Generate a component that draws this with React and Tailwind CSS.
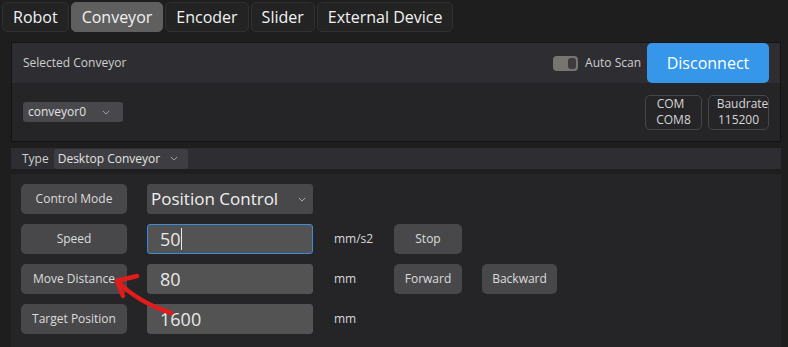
import React from 'react';

const font = { fontFamily: '"Open Sans", "Noto Sans", sans-serif' };

const Chevron = ({ className = '' }) => (
  <svg viewBox="0 0 10 6" className={className} fill="none" stroke="currentColor" strokeWidth="1">
    <path d="M1 1l4 4 4-4" />
  </svg>
);

const Tab = ({ label, active }) => (
  <div
    className={
      'h-[30px] px-[10px] flex items-center rounded-[5px] border text-[16px] text-[#f2f2f2] ' +
      (active ? 'bg-[#5f5f5f] border-[#5f5f5f]' : 'bg-[#232323] border-[#303030]')
    }
  >
    {label}
  </div>
);

const Btn = ({ children, className = '' }) => (
  <div className={'h-[30px] flex items-center justify-center rounded-[5px] bg-[#48484b] text-[12px] text-[#dcdcdc] whitespace-nowrap ' + className}>
    {children}
  </div>
);

const Field = ({ value, focused, caret }) => (
  <div
    className={
      'w-[166px] h-[30px] flex items-center px-[12px] rounded-[3px] bg-[#535353] text-[18px] text-[#e8e8e8] border ' +
      (focused ? 'border-[#3a8bd8]' : 'border-[#535353]')
    }
  >
    {value}
    {caret && <span className="w-px h-[22px] bg-[#e8e8e8]" />}
  </div>
);

export default function App() {
  return (
    <div style={font} className="relative w-[788px] h-[347px] bg-[#1e1e1e] overflow-hidden">
      {/* tabs */}
      <div className="flex gap-[2px] pl-[2px] pt-[2px]">
        <Tab label="Robot" />
        <Tab label="Conveyor" active />
        <Tab label="Encoder" />
        <Tab label="Slider" />
        <Tab label="External Device" />
      </div>

      {/* connection panel */}
      <div className="ml-[11px] mt-[10px] w-[770px] h-[100px] border border-[#141414] flex flex-col">
        <div className="h-[40px] bg-[#2e2e32] flex items-center pl-[11px]">
          <span className="text-[12px] text-[#cfcfcf]">Selected Conveyor</span>
          <div className="ml-auto flex items-center h-full">
            <div className="w-[25px] h-[15px] rounded-[4px] bg-[#76756f] flex items-center justify-end pr-[2px]">
              <div className="w-[8px] h-[11px] rounded-[3px] bg-[#3c3c3c]" />
            </div>
            <span className="ml-[7px] text-[12px] text-[#cfcfcf]">Auto Scan</span>
            <div className="ml-[6px] mr-[11px] w-[122px] h-full rounded-[5px] bg-[#3596ea] flex items-center justify-center text-[16px] text-white">
              Disconnect
            </div>
          </div>
        </div>
        <div className="flex-1 bg-[#252528] flex items-center pl-[11px] pr-[11px]">
          <div className="w-[100px] h-[20px] rounded-[3px] bg-[#48484c] flex items-center pl-[5px] text-[12px] text-[#e2e2e2]">
            conveyor0
            <Chevron className="w-[8px] h-[5px] ml-[16px] text-[#bbbbbb]" />
          </div>
          <div className="ml-auto flex gap-[6px]">
            <div className="w-[57px] h-[35px] rounded-[5px] border border-[#464646] flex flex-col items-center justify-center text-[12px] leading-[16px] text-[#d6d6d6]">
              <span className="-ml-[6px]">COM</span>
              <span>COM8</span>
            </div>
            <div className="w-[61px] h-[35px] rounded-[5px] border border-[#464646] flex flex-col items-center justify-center text-[12px] leading-[16px] text-[#d6d6d6]">
              <span className="ml-[8px]">Baudrate</span>
              <span>115200</span>
            </div>
          </div>
        </div>
      </div>

      {/* type row */}
      <div className="ml-[11px] mt-[6px] w-[770px] h-[21px] bg-[#2e2e32] flex items-center pl-[11px]">
        <span className="text-[12px] text-[#d0d0d0]">Type</span>
        <div className="ml-[5px] w-[134px] h-[20px] rounded-[3px] bg-[#3e3e42] flex items-center pl-[4px] text-[12px] text-[#e2e2e2]">
          Desktop Conveyor
          <Chevron className="w-[8px] h-[5px] ml-[10px] text-[#bbbbbb]" />
        </div>
      </div>

      {/* control panel */}
      <div className="ml-[11px] mt-[5px] w-[770px] h-[180px] bg-[#252528] pl-[10px] pt-[10px] flex flex-col gap-[10px]">
        <div className="flex items-center">
          <Btn className="w-[106px]">Control Mode</Btn>
          <div className="ml-[20px] w-[166px] h-[30px] rounded-[3px] bg-[#48484b] flex items-center pl-[4px] text-[17px] text-[#f0f0f0] whitespace-nowrap">
            Position Control
            <Chevron className="w-[8px] h-[5px] ml-[20px] text-[#cccccc]" />
          </div>
        </div>
        <div className="flex items-center">
          <Btn className="w-[106px]">Speed</Btn>
          <div className="ml-[20px]"><Field value="50" focused caret /></div>
          <span className="ml-[21px] w-[60px] text-[12px] text-[#d8d8d8]">mm/s2</span>
          <Btn className="w-[68px]">Stop</Btn>
        </div>
        <div className="flex items-center">
          <Btn className="w-[106px]">Move Distance</Btn>
          <div className="ml-[20px]"><Field value="80" /></div>
          <span className="ml-[21px] w-[60px] text-[12px] text-[#d8d8d8]">mm</span>
          <Btn className="w-[68px]">Forward</Btn>
          <Btn className="w-[75px] ml-[20px]">Backward</Btn>
        </div>
        <div className="flex items-center">
          <Btn className="w-[106px]">Target Position</Btn>
          <div className="ml-[20px]"><Field value="1600" /></div>
          <span className="ml-[21px] w-[60px] text-[12px] text-[#d8d8d8]">mm</span>
        </div>
      </div>

      {/* red annotation arrow */}
      <svg className="absolute left-0 top-0 pointer-events-none" width="788" height="347">
        <g fill="none" stroke="#e21b1b" strokeWidth="4.5" strokeLinecap="round" strokeLinejoin="round">
          <path d="M171 313 C150 306 132 296 118 282" />
          <path d="M137 276 L117 281 L123 296" />
        </g>
      </svg>
    </div>
  );
}
